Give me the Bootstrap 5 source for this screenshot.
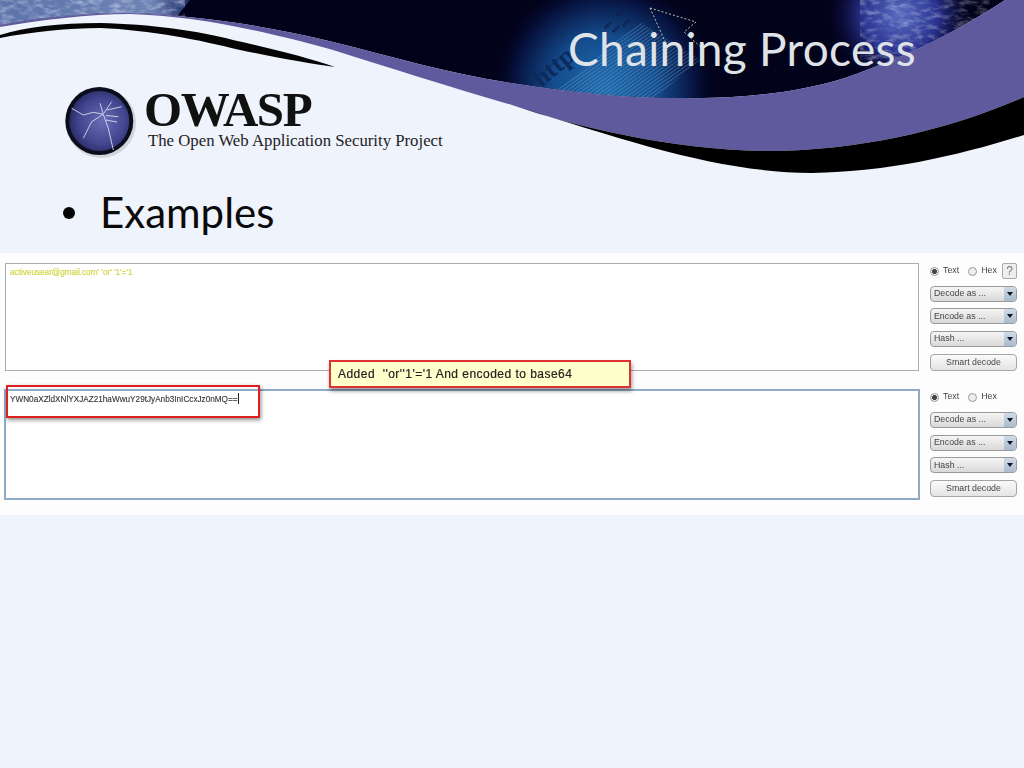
<!DOCTYPE html>
<html lang="en">
<head>
<meta charset="utf-8">
<title>Chaining Process</title>
<link href="https://cdn.jsdelivr.net/npm/bootstrap@5.3.0/dist/css/bootstrap.min.css" rel="stylesheet">
<style>
html,body{margin:0;background:#eff3fc;}
.slide-page{width:1024px;height:768px;overflow:hidden;position:relative;background:#eff3fc;font-family:"Lato",sans-serif;}
.hdr-art{position:absolute;left:0;top:0;width:1024px;height:180px;}
.hdr-zone{position:relative;height:253px;}
.slide-title{font-family:"Lato",sans-serif;font-size:46px;line-height:50px;color:#dfe2e6;padding:24px 0 0 568px;margin:0;font-weight:400;letter-spacing:.3px;}
.logo-row{padding:8px 0 0 60px;height:96px;}
.logo-words{margin-left:6px;font-family:"Liberation Serif",serif;color:#111;}
.logo-big{font-size:49px;font-weight:700;line-height:36px;height:45px;letter-spacing:-1.4px;padding-top:10px;margin-left:0;}
.logo-small{font-size:16.75px;line-height:20px;margin-left:4px;margin-top:4px;white-space:nowrap;color:#222;}
.bullet-row{padding:17px 0 0 63px;font-size:42px;line-height:50px;color:#0a0a0a;}
.bullet-dot{width:12px;height:12px;border-radius:50%;background:#050505;margin-right:25px;margin-top:2px;}
.tool-panel{background:#fdfdfd;height:262px;padding:10px 7px 0 5px;font-family:"Liberation Sans",sans-serif;position:relative;filter:blur(.35px);}
.tool-block{gap:11px;}
.tool-block+.tool-block{margin-top:18px;gap:10px;}
.text-pane{width:914px;height:108px;border:1px solid #adadad;background:#fff;padding:3px 4px;font-size:8.2px;line-height:12px;flex-shrink:0;}
.pane-active{width:916px;height:111px;margin-left:-1px;border:2px solid #8fabc8;}
.pane-yellow{color:#d0d440;-webkit-text-stroke:.15px #d0d440;}
.pane-dark{color:#333;font-size:8.2px;padding-top:2px;-webkit-text-stroke:.1px #333;}
.caret-bar{display:inline-block;width:1px;height:11px;background:#222;vertical-align:-2px;}
.side-col{width:87px;gap:6.7px;flex-shrink:0;}
.side-second{margin-top:0;gap:6.8px;}
.radio-line{height:16px;font-size:8.8px;color:#444;}
.radio-dot{width:9px;height:9px;border-radius:50%;border:1px solid #999;background:#eee;margin-right:4px;}
.radio-on{background:radial-gradient(circle,#444 0 2.2px,#eee 2.6px);}
.radio-gap{width:9px;}
.help-key{margin-left:auto;width:15px;height:16px;border:1px solid #aaa;border-radius:2px;background:#eee;color:#777;font-size:12px;line-height:14px;text-align:center;}
.drop-pick{height:16px;border:1px solid #9a9a9a;border-radius:4px;background:linear-gradient(#f5f5f5,#d9d9d9);font-size:8.8px;color:#444;padding-left:3px;overflow:hidden;}
.drop-arrow{margin-left:auto;width:12px;height:100%;background:linear-gradient(#cfdbe6,#a9bccd);}
.drop-arrow::after{content:"";border-left:3px solid transparent;border-right:3px solid transparent;border-top:4px solid #112;}
.smart-key{height:17px;border:1px solid #a5a5a5;border-radius:4px;background:linear-gradient(#fafafa,#e4e4e4);font-size:8.8px;color:#444;}
.note-tag{position:absolute;left:329px;top:107px;width:302px;height:28px;border:2px solid #dd3333;background:#ffffcc;box-shadow:1px 3px 4px rgba(0,0,0,.4);font-size:12px;color:#222;padding-left:7px;letter-spacing:.47px;-webkit-text-stroke:.2px #222;white-space:pre;}
.red-frame{position:absolute;left:6px;top:132px;width:254px;height:33px;border:2px solid #dd1f1f;box-shadow:1px 2px 4px rgba(0,0,0,.45);}
</style>
</head>
<body>
<div class="slide-page">
  <svg class="hdr-art" viewBox="0 0 1024 180" aria-hidden="true">
    <defs>
      <radialGradient id="circ" gradientUnits="userSpaceOnUse" cx="605" cy="88" r="115">
        <stop offset="0" stop-color="#1f6cae"/><stop offset=".45" stop-color="#144c8d"/><stop offset=".8" stop-color="#06103c"/><stop offset="1" stop-color="#02021a" stop-opacity="0"/>
      </radialGradient>
      <linearGradient id="leftTex" x1="0" x2="1" y1="0" y2="0">
        <stop offset="0" stop-color="#5c72aa"/><stop offset=".8" stop-color="#6f84b5"/><stop offset="1" stop-color="#1c2a66"/>
      </linearGradient>
      <radialGradient id="blobA" gradientUnits="userSpaceOnUse" cx="900" cy="15" r="75">
        <stop offset="0" stop-color="#5a6cc0"/><stop offset=".5" stop-color="#2a3390"/><stop offset="1" stop-color="#050530" stop-opacity="0"/>
      </radialGradient>
      <pattern id="scan" width="3" height="3" patternUnits="userSpaceOnUse" patternTransform="rotate(-35)">
        <rect width="3" height="1" fill="#7ab4de" opacity=".35"/>
      </pattern>
      <filter id="grain" x="0" y="0" width="100%" height="100%"><feTurbulence type="fractalNoise" baseFrequency=".09 .2" numOctaves="3" seed="7"/><feColorMatrix values="0 0 0 0 .85  0 0 0 0 .9  0 0 0 0 1  1.6 0 0 0 -.7"/></filter>
      <clipPath id="skyClip"><path d="M0 25C30 19 80 13 130 13C190 15 260 24 333 42C390 56 450 74 512 83C570 92 620 98 679 98C730 99 790 95 845 78C910 55 960 30 1005 0H0Z"/></clipPath>
    </defs>
    <g clip-path="url(#skyClip)">
      <rect width="1024" height="110" fill="#02021a"/>
      <path d="M0 0H190L170 25H0Z" fill="url(#leftTex)"/>
      <rect x="0" y="0" width="185" height="25" filter="url(#grain)" opacity=".7"/>
      <rect x="480" y="0" width="260" height="110" fill="url(#circ)"/>
      <path d="M545 100L640 22L700 60L640 110Z" fill="url(#scan)"/>
      <rect x="830" y="0" width="175" height="80" fill="url(#blobA)"/>
      <rect x="860" y="0" width="130" height="60" filter="url(#grain)" opacity=".55"/>
      <path d="M650 8L668 48M650 8L696 22M696 22L684 32L704 50" fill="none" stroke="#b7c7a0" stroke-width="1" stroke-dasharray="2 2"/>
      <path d="M605 28l6 -6m2 10l6 -6m-2 -10l6 -6m0 16l6 -6" stroke="#12204e" stroke-width="3" stroke-dasharray="2 1"/>
      <text x="541" y="88" transform="rotate(-40 541 88)" font-family="Liberation Serif,serif" font-size="26" font-weight="700" fill="#0c2a5c">http</text>
    </g>
    <path d="M0 27C40 20 90 14 130 14C190 16 250 27 333 50C390 68 450 87 512 105C580 128 680 152 780 151C880 148 960 125 1024 97V0H1005C960 30 910 55 845 78C790 95 730 99 679 98C620 98 570 92 512 83C450 74 390 56 333 42C260 24 190 15 130 13C80 13 30 19 0 25Z" fill="#5f5a9d"/>
    <path d="M512 105C580 128 680 152 780 151C880 148 960 125 1024 97V135C960 155 890 172 812 173C720 172 640 145 512 105Z" fill="#000"/>
    <path d="M0 38C30 32 70 28 100 28C150 30 200 40 240 50C280 58 310 64 335 67C310 58 270 48 233 40C200 31 150 24 100 23C60 23 25 27 0 35Z" fill="#050505"/>
  </svg>

  <div class="hdr-zone">
    <h1 class="slide-title">Chaining Process</h1>
    <div class="logo-row d-flex align-items-start">
      <svg width="78" height="78" viewBox="0 0 78 78" aria-hidden="true" class="flex-shrink-0">
        <defs><radialGradient id="orb" cx=".55" cy=".5" r=".55"><stop offset="0" stop-color="#6a6cb6"/><stop offset=".7" stop-color="#43458f"/><stop offset="1" stop-color="#2a2c66"/></radialGradient></defs>
        <circle cx="41" cy="41" r="35" fill="#c4c8cc" opacity=".7"/>
        <circle cx="39.3" cy="39" r="34" fill="#0b0d1c"/>
        <circle cx="39.3" cy="39" r="30" fill="url(#orb)"/>
        <path d="M11.7 26.3L23.3 33L33.3 30.3L43.3 32.3L48.3 46.3L53.3 68M23.3 56.3L31.7 39.7L43.3 32.3M43.3 32.3L40 21.3M44 31L51.7 19.7M46 33.5L58.3 34.7M47 28L61.7 24.7M46 38L57 40" fill="none" stroke="#d7d9ef" stroke-width=".9"/>
      </svg>
      <div class="logo-words">
        <div class="logo-big">OWASP</div>
        <div class="logo-small">The Open Web Application Security Project</div>
      </div>
    </div>
    <div class="bullet-row d-flex align-items-center">
      <span class="bullet-dot flex-shrink-0"></span><span>Examples</span>
    </div>
  </div>

  <div class="tool-panel">
    <div class="tool-block d-flex align-items-start">
      <div class="text-pane pane-yellow">activeusear@gmail.com' 'or' '1'='1</div>
      <div class="side-col d-flex flex-column">
        <div class="radio-line d-flex align-items-center"><span class="radio-dot radio-on"></span>Text<span class="radio-gap"></span><span class="radio-dot"></span>Hex<span class="help-key">?</span></div>
        <div class="drop-pick d-flex align-items-center">Decode as ...<span class="drop-arrow d-flex align-items-center justify-content-center"></span></div>
        <div class="drop-pick d-flex align-items-center">Encode as ...<span class="drop-arrow d-flex align-items-center justify-content-center"></span></div>
        <div class="drop-pick d-flex align-items-center">Hash ...<span class="drop-arrow d-flex align-items-center justify-content-center"></span></div>
        <div class="smart-key d-flex align-items-center justify-content-center">Smart decode</div>
      </div>
    </div>
    <div class="tool-block d-flex align-items-start">
      <div class="text-pane pane-active pane-dark">YWN0aXZldXNlYXJAZ21haWwuY29tJyAnb3InICcxJz0nMQ==<span class="caret-bar"></span></div>
      <div class="side-col side-second d-flex flex-column">
        <div class="radio-line d-flex align-items-center"><span class="radio-dot radio-on"></span>Text<span class="radio-gap"></span><span class="radio-dot"></span>Hex</div>
        <div class="drop-pick d-flex align-items-center">Decode as ...<span class="drop-arrow d-flex align-items-center justify-content-center"></span></div>
        <div class="drop-pick d-flex align-items-center">Encode as ...<span class="drop-arrow d-flex align-items-center justify-content-center"></span></div>
        <div class="drop-pick d-flex align-items-center">Hash ...<span class="drop-arrow d-flex align-items-center justify-content-center"></span></div>
        <div class="smart-key d-flex align-items-center justify-content-center">Smart decode</div>
      </div>
    </div>
    <div class="note-tag d-flex align-items-center">Added  ''or''1'='1 And encoded to base64</div>
    <div class="red-frame"></div>
  </div>
</div>
<script src="https://cdn.jsdelivr.net/npm/bootstrap@5.3.0/dist/js/bootstrap.bundle.min.js"></script>
</body>
</html>
